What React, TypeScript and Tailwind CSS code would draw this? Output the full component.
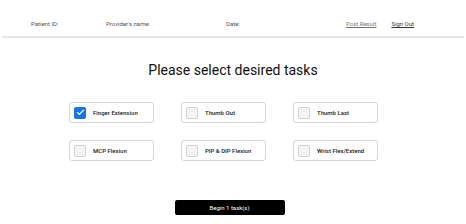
import { Check } from "lucide-react";

const tasks = [
  { name: "Finger Extension", checked: true },
  { name: "Thumb Out", checked: false },
  { name: "Thumb Last", checked: false },
  { name: "MCP Flexion", checked: false },
  { name: "PIP & DIP Flexion", checked: false },
  { name: "Wrist Flex/Extend", checked: false },
];

export default function App() {
  const count = tasks.filter((t) => t.checked).length;

  return (
    <div className="w-[466px] h-[224px] bg-white font-['Roboto',sans-serif] overflow-hidden">
      <header className="mx-[2px] h-[38px] border-b-2 border-[#e6e6e6] flex items-end pb-[8px] text-[6px] text-[#555]">
        <span className="ml-[29px] w-[75px]">Patient ID:</span>
        <span className="w-[120px]">Provider&apos;s name:</span>
        <span>Date:</span>
        <a className="ml-auto text-[#777] underline">Post Result</a>
        <a className="ml-[15px] mr-[50px] text-[#333] underline">Sign Out</a>
      </header>

      <h1 className="mt-[23px] text-center text-[14px] leading-[18px] text-[#111]">
        Please select desired tasks
      </h1>

      <div className="mt-[23px] ml-[69px] grid grid-cols-[85px_85px_85px] gap-x-[27px] gap-y-[17px]">
        {tasks.map((t) => (
          <div
            key={t.name}
            className="h-[21px] rounded-[3px] border border-[#d6d6d6] flex items-center pl-[4px] gap-[7px]"
          >
            {t.checked ? (
              <span className="w-[12px] h-[12px] rounded-[2px] bg-[#1a73e8] flex items-center justify-center">
                <Check className="w-[9px] h-[9px] text-white" strokeWidth={3} />
              </span>
            ) : (
              <span className="w-[12px] h-[12px] rounded-[2px] bg-[#f4f4f4] border border-[#d0d0d0]" />
            )}
            <span className="text-[6px] font-medium text-[#222]">{t.name}</span>
          </div>
        ))}
      </div>

      <div className="mt-[39px] flex justify-center">
        <button className="ml-[-7px] w-[110px] h-[15px] rounded-[2px] bg-black text-white text-[6px] font-['Roboto',sans-serif]">
          Begin {count} task(s)
        </button>
      </div>
    </div>
  );
}
